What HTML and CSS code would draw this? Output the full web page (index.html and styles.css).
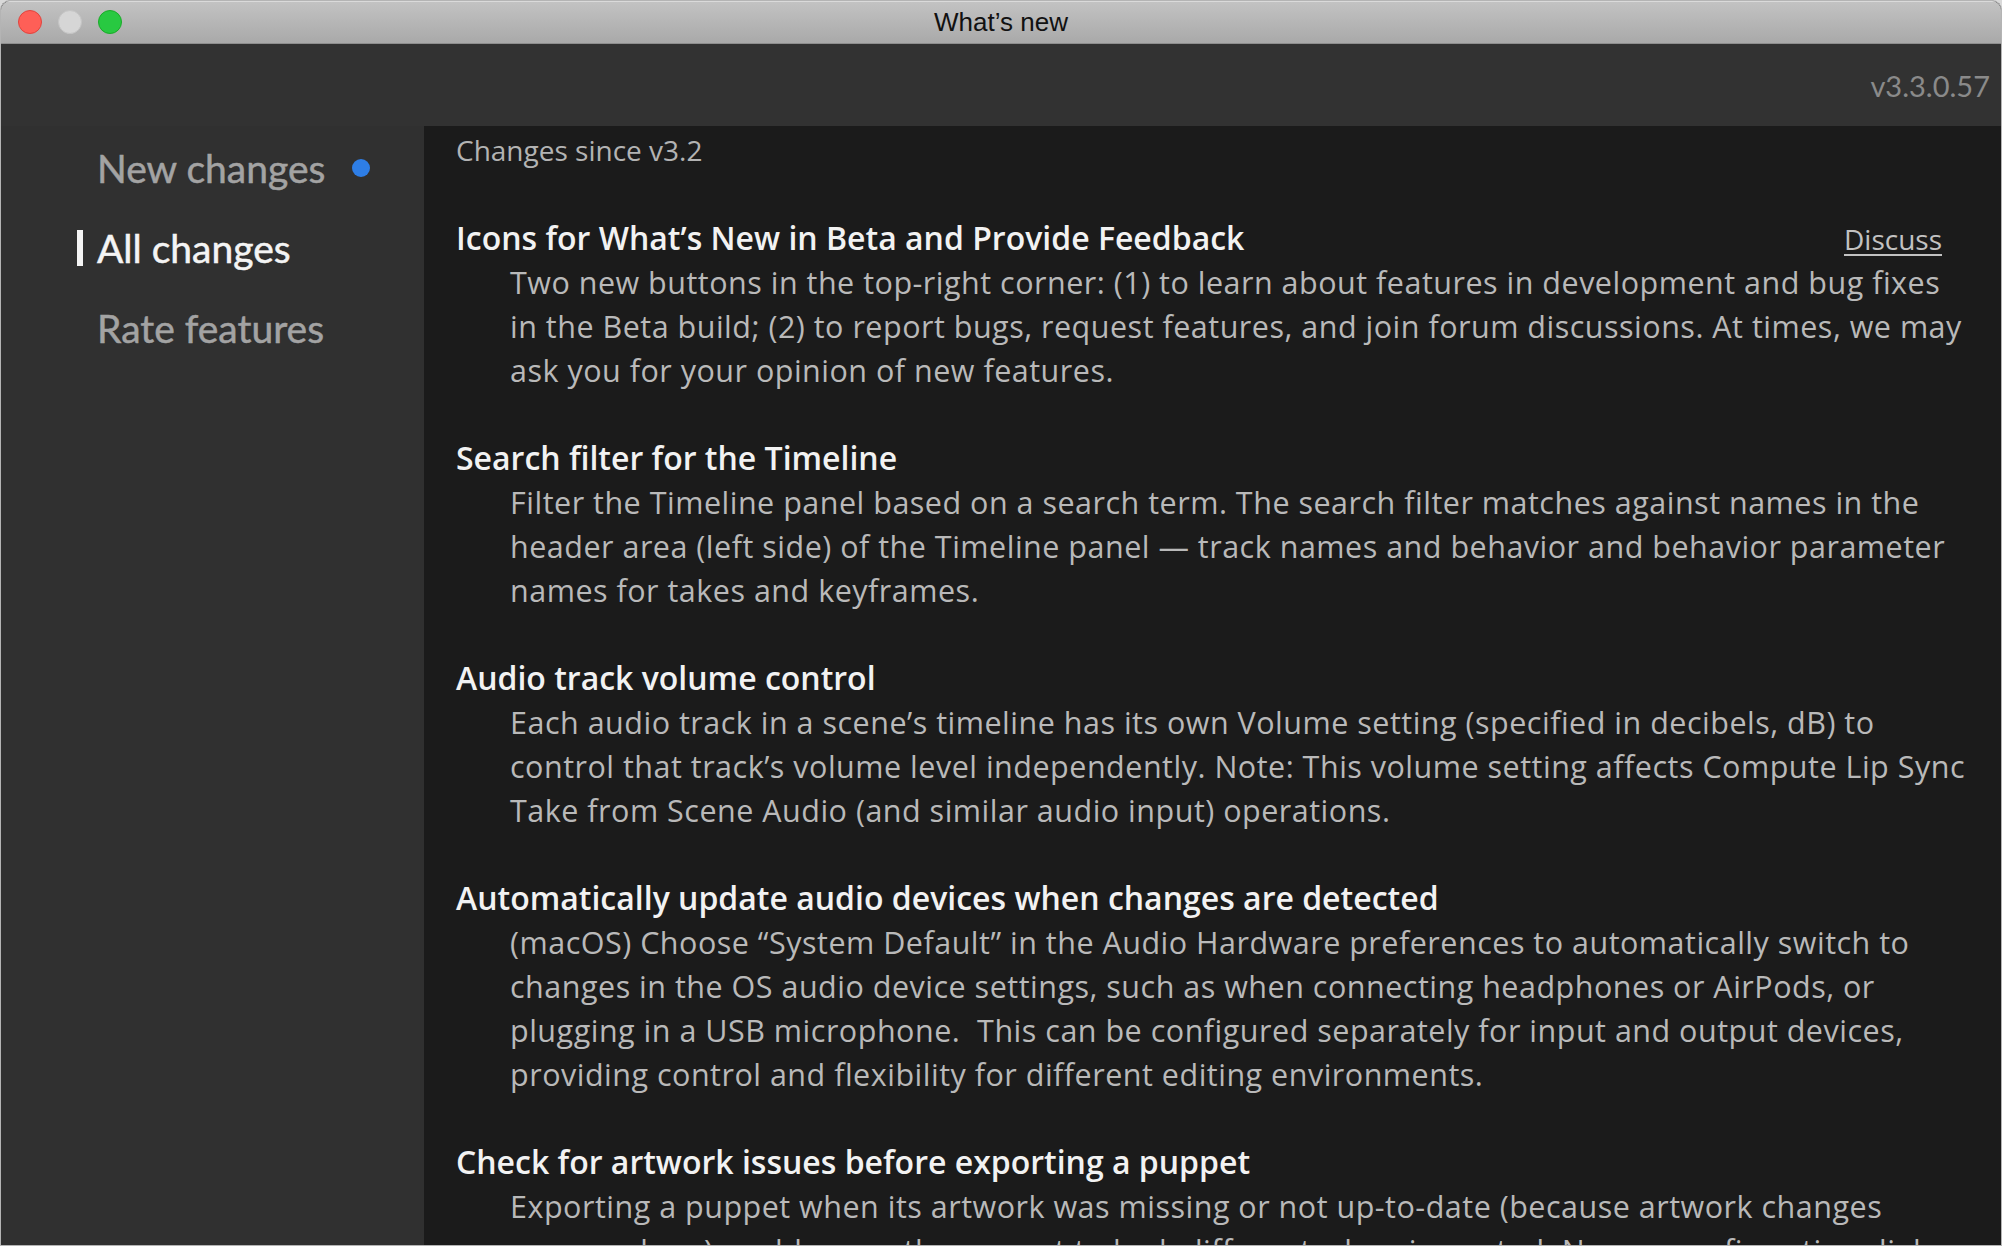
FILE: index.html
```html
<!DOCTYPE html>
<html lang="en">
  <head>
    <meta charset="UTF-8" />
    <title>What’s new</title>
    <link rel="stylesheet" href="styles.css">
  </head>
  <body>
    <div class="window">
      <div class="titlebar">
        <div class="lights">
          <span class="light close"></span>
          <span class="light min"></span>
          <span class="light max"></span>
        </div>
        <div class="title">What’s new</div>
      </div>

      <div class="topbar">
        <span class="version">v3.3.0.57</span>
      </div>

      <div class="main">
        <nav class="sidebar">
          <a class="nav-item">New changes<span class="dot"></span></a>
          <a class="nav-item active">All changes</a>
          <a class="nav-item">Rate features</a>
        </nav>

        <div class="content">
          <div class="since">Changes since v3.2</div>

          <section class="change">
            <div class="change-head">
              <h2>Icons for What’s New in Beta and Provide Feedback</h2>
              <a class="discuss">Discuss</a>
            </div>
            <p>Two new buttons in the top-right corner: (1) to learn about features in development and bug fixes<br>
              in the Beta build; (2) to report bugs, request features, and join forum discussions. At times, we may<br>
              ask you for your opinion of new features.</p>
          </section>

          <section class="change">
            <div class="change-head">
              <h2>Search filter for the Timeline</h2>
            </div>
            <p>Filter the Timeline panel based on a search term. The search filter matches against names in the<br>
              header area (left side) of the Timeline panel — track names and behavior and behavior parameter<br>
              names for takes and keyframes.</p>
          </section>

          <section class="change">
            <div class="change-head">
              <h2>Audio track volume control</h2>
            </div>
            <p>Each audio track in a scene’s timeline has its own Volume setting (specified in decibels, dB) to<br>
              control that track’s volume level independently. Note: This volume setting affects Compute Lip Sync<br>
              Take from Scene Audio (and similar audio input) operations.</p>
          </section>

          <section class="change">
            <div class="change-head">
              <h2>Automatically update audio devices when changes are detected</h2>
            </div>
            <p>(macOS) Choose “System Default” in the Audio Hardware preferences to automatically switch to<br>
              changes in the OS audio device settings, such as when connecting headphones or AirPods, or<br>
              plugging in a USB microphone.&nbsp; This can be configured separately for input and output devices,<br>
              providing control and flexibility for different editing environments.</p>
          </section>

          <section class="change">
            <div class="change-head">
              <h2>Check for artwork issues before exporting a puppet</h2>
            </div>
            <p>Exporting a puppet when its artwork was missing or not up-to-date (because artwork changes<br>
              were undone) could cause the puppet to look different when imported. Now, a confirmation dialog<br>
              warns you about these artwork issues before the puppet is exported.</p>
          </section>
        </div>
      </div>
    </div>
  </body>
</html>
```

FILE: styles.css
```css
html,
body {
  margin: 0;
  height: 100%;
  background: #d9d9d9;
}

body {
  font-family: Lato, "Open Sans", sans-serif;
}

.window {
  display: flex;
  flex-direction: column;
  height: 1244px;
  border: 1px solid #b4b4b4;
  border-radius: 10px 10px 0 0;
  overflow: hidden;
  background: #303030;
}

/* title bar */
.titlebar {
  display: grid;
  grid-template-columns: 1fr auto 1fr;
  align-items: center;
  height: 42px;
  flex-shrink: 0;
  background: linear-gradient(#c3c3c3, #a9a9a9);
  border-bottom: 1px solid #8e8e8e;
  box-shadow: inset 0 1px 0 #dadada;

  .lights {
    display: flex;
    gap: 16px;
    padding-left: 17px;
  }

  .light {
    width: 24px;
    height: 24px;
    border-radius: 50%;
    box-sizing: border-box;
  }

  .close {
    background: #fe5f57;
    border: 1px solid #e0443e;
  }

  .min {
    background: #d6d6d6;
    border: 1px solid #c4c4c4;
  }

  .max {
    background: #28c941;
    border: 1px solid #1aab29;
  }

  .title {
    font-family: "Liberation Sans", Arial, sans-serif;
    font-size: 26px;
    color: #111;
  }
}

/* version strip */
.topbar {
  display: flex;
  justify-content: flex-end;
  align-items: center;
  height: 82px;
  flex-shrink: 0;
  padding-right: 11px;
  background: #323232;

  .version {
    font-size: 29px;
    color: #8a8a8a;
  }
}

.main {
  display: flex;
  flex: 1;
  min-height: 0;
}

.sidebar {
  display: flex;
  flex-direction: column;
  width: 423px;
  flex-shrink: 0;
  padding-top: 2px;
  background: #303030;

  .nav-item {
    position: relative;
    display: flex;
    align-items: center;
    padding-left: 96px;
    font-size: 39px;
    line-height: 80px;
    color: #a3a3a3;
    -webkit-text-stroke: 0.5px currentColor;
  }

  .nav-item.active {
    color: #f4f4f4;

    &::before {
      content: "";
      position: absolute;
      left: 76px;
      top: 22px;
      width: 6px;
      height: 36px;
      background: #f4f4f4;
    }
  }

  .dot {
    width: 18px;
    height: 18px;
    margin-left: 27px;
    border-radius: 50%;
    background: #2e7ee6;
    -webkit-text-stroke: 0;
  }
}

.content {
  flex: 1;
  min-width: 0;
  padding: 2px 0 0 32px;
  overflow: hidden;
  background: #1b1b1b;
  font-family: "Open Sans", Lato, sans-serif;

  .since {
    font-size: 28px;
    line-height: 44px;
    color: #b3b3b3;
  }

  .change {
    margin-top: 44px;
  }

  .change-head {
    display: flex;
    justify-content: space-between;
    align-items: baseline;
    padding-right: 59px;

    h2 {
      margin: 0;
      font-size: 32px;
      font-weight: 600;
      line-height: 44px;
      color: #f2f2f2;
    }
  }

  .discuss {
    font-size: 28px;
    color: #c2c2c2;
    text-decoration: underline;
    text-underline-offset: 4px;
  }

  p {
    margin: 0;
    padding-left: 54px;
    font-size: 30.5px;
    line-height: 44px;
    letter-spacing: 0.5px;
    white-space: nowrap;
    color: #b9b9b9;
  }
}
```
